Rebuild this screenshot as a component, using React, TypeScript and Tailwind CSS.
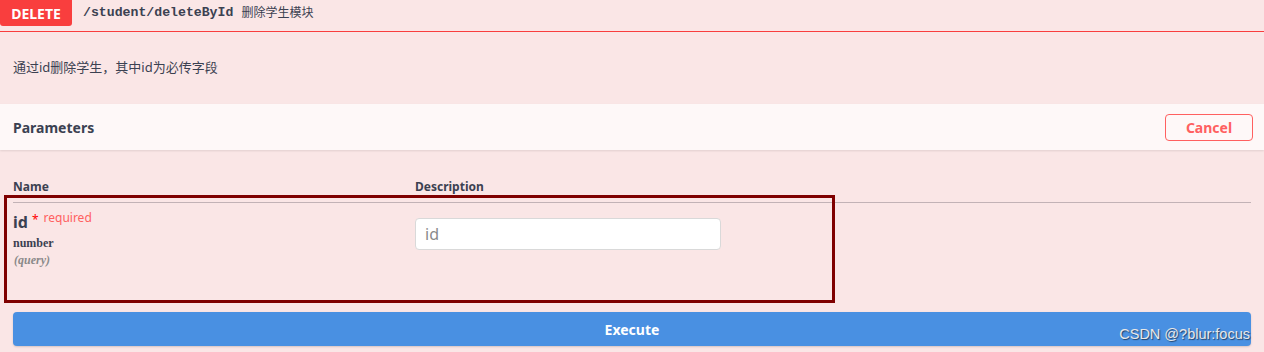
import React from 'react';

const sans = "font-['Noto_Sans','Noto_Sans_CJK_SC',sans-serif]";

export default function App() {
  return (
    <div className={`relative w-[1264px] h-[352px] overflow-hidden bg-[#fae6e6] text-[#3b4151] ${sans}`}>
      {/* summary */}
      <div className="flex items-start h-[32px] border-b border-[#f93e3e]">
        <div className="w-[72px] h-[26px] rounded-b-[3px] bg-[#f93e3e] text-white font-bold text-[14px] flex items-center justify-center">
          DELETE
        </div>
        <div className="flex items-center h-[26px] pl-[11px]">
          <span className="font-['Liberation_Mono',monospace] font-bold text-[13.2px] text-[#3b4151]">/student/deleteById</span>
          <span className="ml-[8px] text-[12px] text-[#3b4151]">删除学生模块</span>
        </div>
      </div>

      {/* description */}
      <div className="h-[72px] flex items-center px-[13px] text-[13px]">
        通过id删除学生，其中id为必传字段
      </div>

      {/* parameters header */}
      <div className="h-[46px] bg-[#fef8f8] shadow-[0_1px_2px_rgba(0,0,0,0.1)] flex items-center justify-between px-[13px]">
        <span className="font-bold text-[14px]">Parameters</span>
        <button className="w-[88px] h-[27px] mr-[-2px] rounded-[4px] border-[1.5px] border-[#ff6060] text-[#ff6060] font-bold text-[14px] flex items-center justify-center">
          Cancel
        </button>
      </div>

      {/* table */}
      <div className="px-[13px] pt-[22px]">
        <div className="flex text-[12px] font-bold h-[31px] items-center border-b border-[#c2b2b6]">
          <div className="w-[402px]">Name</div>
          <div>Description</div>
        </div>
        <div className="flex h-[108px] pt-[7px]">
          <div className="w-[402px]">
            <div className="flex items-start">
              <span className="text-[16px] font-bold leading-[24px]">id</span>
              <span className="text-[#ff0000] text-[12px] ml-[4px] mt-[2px] leading-[16px]">*</span>
              <span className="text-[#ff6060] text-[12px] ml-[5px] leading-[16px]">required</span>
            </div>
            <div className="font-['Liberation_Serif',serif] font-bold text-[12px] leading-[16px] mt-[1px]">number</div>
            <div className="font-['Liberation_Serif',serif] italic font-bold text-[12px] text-[#8a8a8a] leading-[18px] pl-[1px]">(query)</div>
          </div>
          <div className="pt-[8px]">
            <input
              placeholder="id"
              className="w-[306px] h-[32px] rounded-[4px] border border-[#d9d9d9] bg-white px-[9px] text-[16px] placeholder:text-[#8a8a8a] outline-none"
            />
          </div>
        </div>
        <button className="w-full h-[34px] mt-[1px] rounded-[4px] bg-[#4990e2] text-white font-bold text-[14px] shadow-[0_1px_2px_rgba(0,0,0,0.15)]">
          Execute
        </button>
      </div>

      {/* annotation box */}
      <div className="absolute left-[4px] top-[195px] w-[831px] h-[108px] border-[3px] border-[#7f0000]" />

      {/* watermark */}
      <div className="absolute right-[14px] top-[324px] font-['Liberation_Sans',sans-serif] text-[14.5px] text-[#e8e8e8] [text-shadow:1px_1px_1px_rgba(0,0,0,0.55)]">
        CSDN @?blur:focus
      </div>
    </div>
  );
}
